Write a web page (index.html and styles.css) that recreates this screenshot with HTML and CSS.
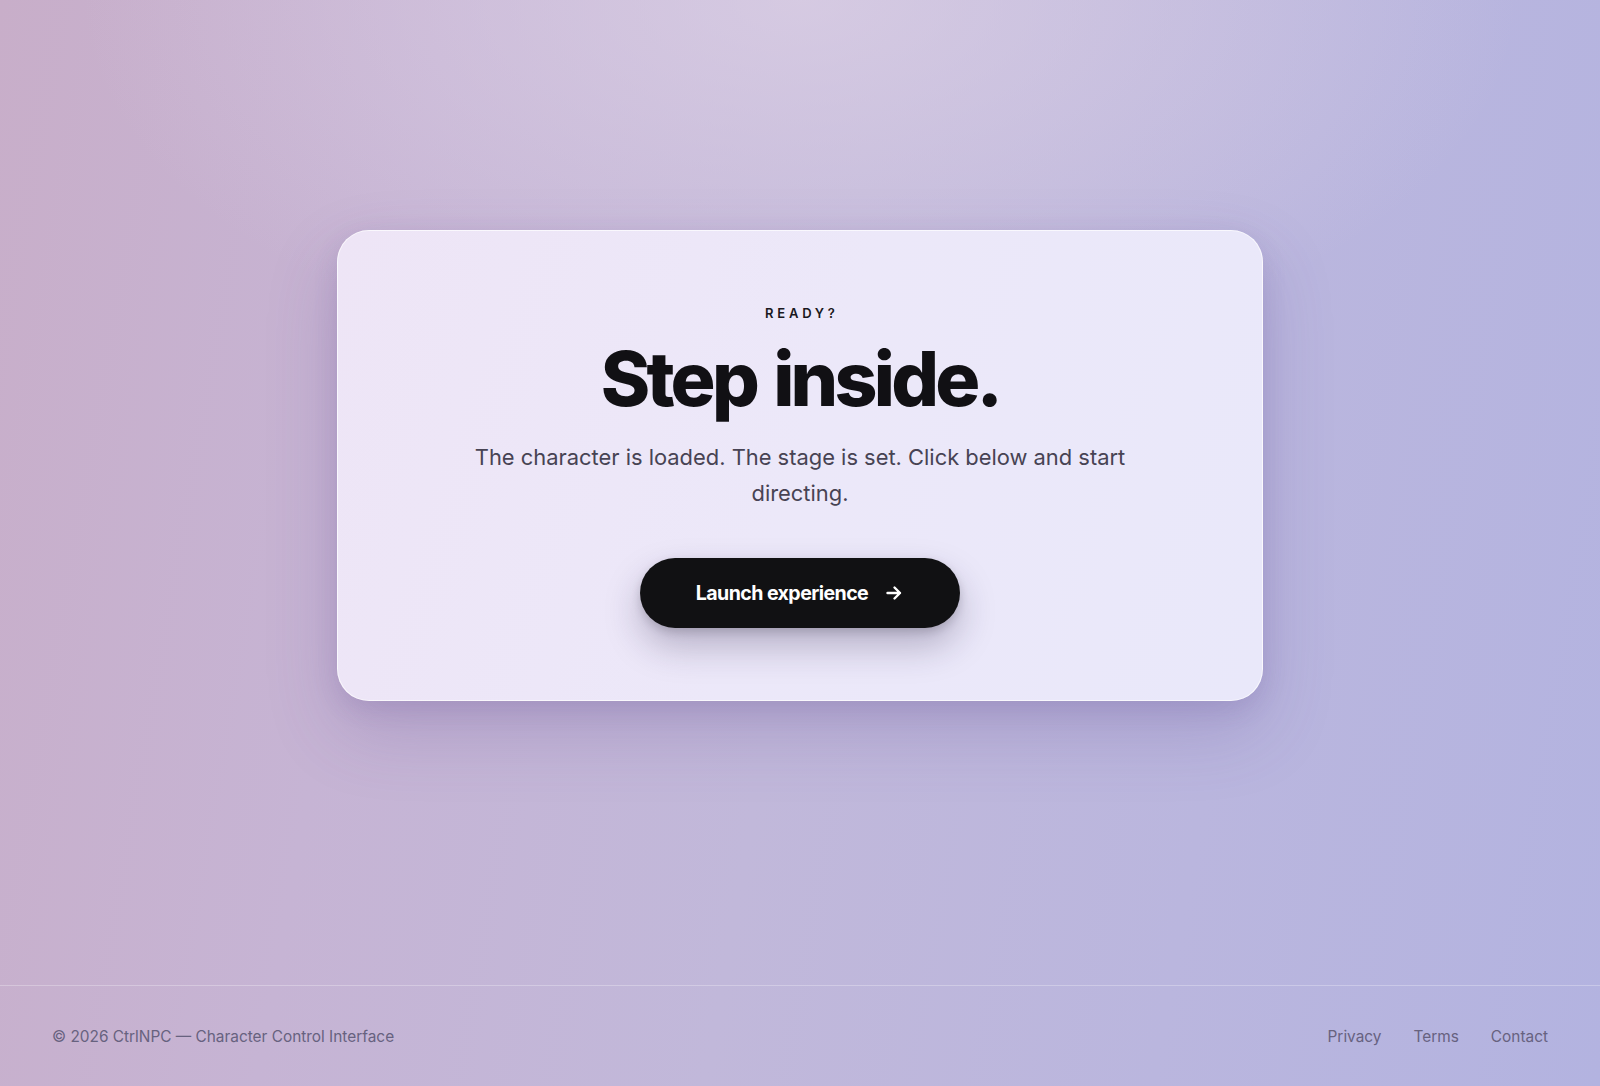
FILE: index.html
```html
<!DOCTYPE html>
<html lang="en">
<head>
<meta charset="utf-8">
<title>CtrlNPC — Step inside</title>
<link rel="stylesheet" href="styles.css">
</head>
<body>
<div class="page">
  <main class="stage">
    <section class="card">
      <p class="eyebrow">READY?</p>
      <h1 class="title">Step inside.</h1>
      <p class="lead">The character is loaded. The stage is set. Click below and start directing.</p>
      <a class="launch" href="#">
        <span>Launch experience</span>
        <svg class="arrow" viewBox="0 0 20 20" width="20" height="20" aria-hidden="true">
          <path d="M3.5 10h12.5M10.5 4.5L16 10l-5.5 5.5" fill="none" stroke="currentColor" stroke-width="2.4" stroke-linecap="round" stroke-linejoin="round"/>
        </svg>
      </a>
    </section>
  </main>
  <footer class="footer">
    <p class="copy">© 2026 CtrlNPC — Character Control Interface</p>
    <nav class="links">
      <a href="#">Privacy</a>
      <a href="#">Terms</a>
      <a href="#">Contact</a>
    </nav>
  </footer>
</div>
</body>
</html>
```

FILE: styles.css
```css
* { box-sizing: border-box; }

html, body {
  margin: 0;
  padding: 0;
  height: 100%;
}

body {
  font-family: Inter, "Noto Sans", "Liberation Sans", sans-serif;
  color: #131217;
  background:
    radial-gradient(ellipse 45% 35% at 50% 0%, rgba(222, 210, 230, 0.7), rgba(222, 210, 230, 0) 100%),
    linear-gradient(100deg, #c8aec9 0%, #c6b4d4 25%, #c1b8da 50%, #bab6de 75%, #b3b3e0 100%);
  overflow: hidden;
}

.page {
  min-height: 1086px;
  display: flex;
  flex-direction: column;
}

.stage {
  flex: 1;
  display: flex;
  align-items: center;
  justify-content: center;
  padding-bottom: 54px;
}

.card {
  width: 926px;
  padding: 72px 64px 72px;
  border-radius: 32px;
  background: linear-gradient(110deg, #eee5f6 0%, #ece8f9 50%, #e9e8fa 100%);
  border: 1px solid rgba(255, 255, 255, 0.7);
  box-shadow: 0 30px 70px rgba(90, 70, 140, 0.22), 0 8px 24px rgba(90, 70, 140, 0.14);
  display: flex;
  flex-direction: column;
  align-items: center;
  text-align: center;
}

.eyebrow {
  margin: 0;
  font-size: 13px;
  line-height: 20px;
  font-weight: 600;
  letter-spacing: 0.29em;
  padding-left: 0.29em;
  color: #1a1820;
}

.title {
  margin: 18px 0 0;
  font-size: 75px;
  line-height: 1;
  font-weight: 800;
  letter-spacing: -0.05em;
  word-spacing: 0.06em;
  color: #111014;
}

.lead {
  margin: 23px 0 0;
  max-width: 700px;
  font-size: 21.9px;
  line-height: 36px;
  font-weight: 400;
  color: #474353;
}

.launch {
  margin-top: 47px;
  height: 70px;
  width: 320px;
  display: flex;
  align-items: center;
  justify-content: center;
  gap: 16px;
  border-radius: 999px;
  background: #111113;
  color: #ffffff;
  text-decoration: none;
  font-size: 19.6px;
  font-weight: 700;
  letter-spacing: -0.03em;
  box-shadow: 0 18px 36px rgba(40, 30, 70, 0.28), 0 4px 10px rgba(0, 0, 0, 0.15);
}

.arrow { display: block; }

.footer {
  height: 101px;
  border-top: 1px solid rgba(255, 255, 255, 0.28);
  padding: 0 52px;
  display: flex;
  align-items: center;
  justify-content: space-between;
  font-size: 15.4px;
  color: #67627f;
}

.copy { margin: 0; }

.links {
  display: flex;
  gap: 32px;
}

.links a {
  color: #67627f;
  text-decoration: none;
}
```
